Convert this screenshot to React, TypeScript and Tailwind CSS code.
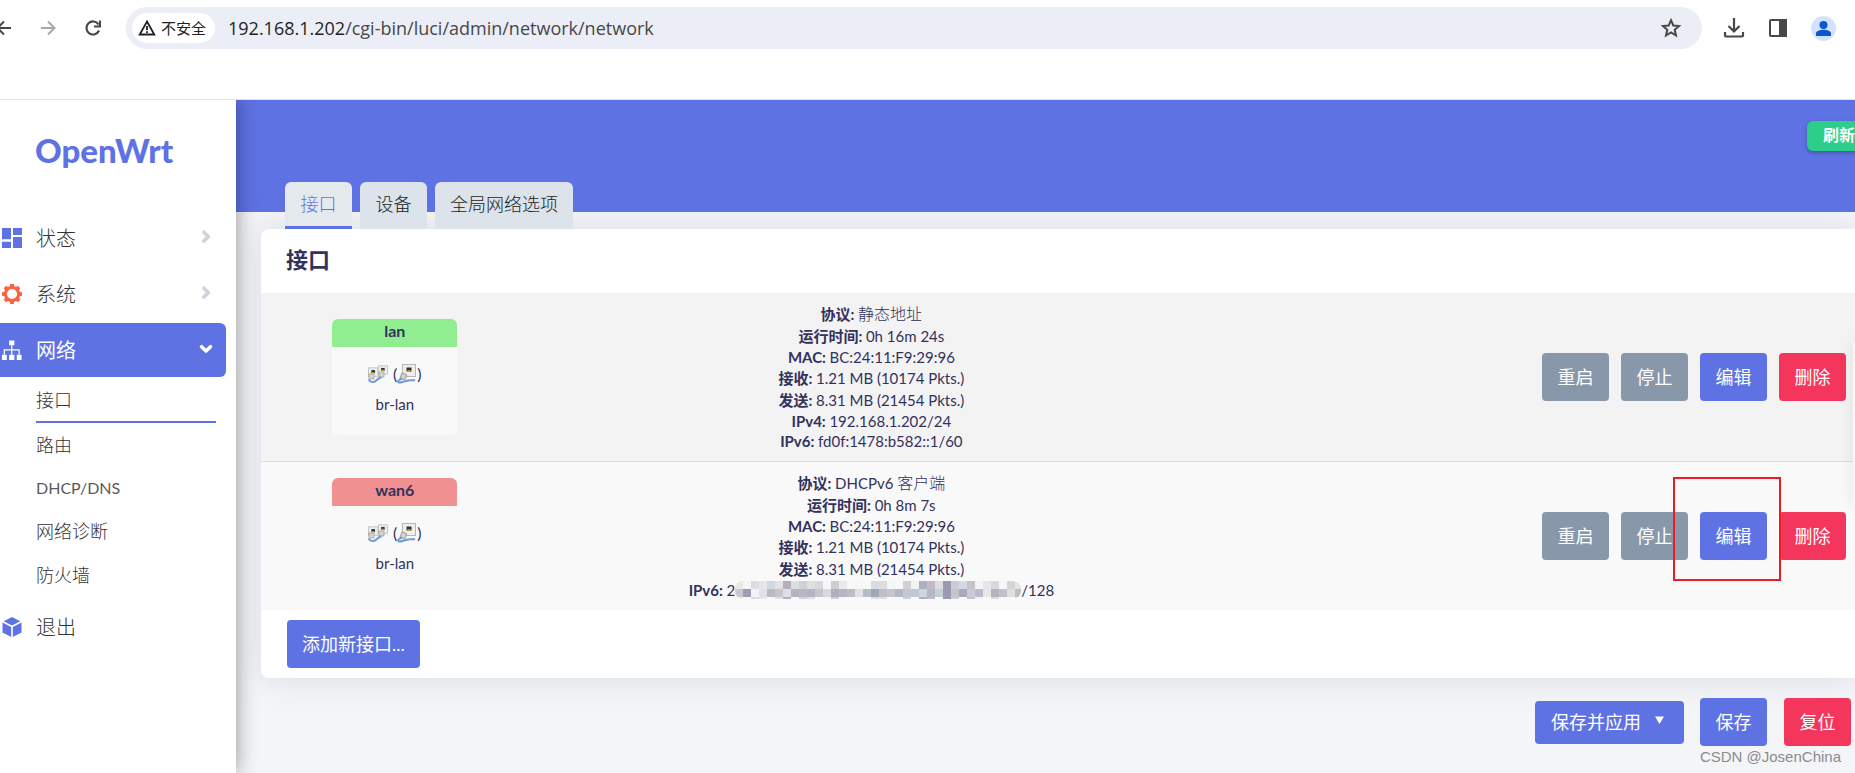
import type { ReactNode } from 'react';

const navText = 'flex h-[54px] items-center pl-[2px] pr-[11px] text-xl font-light';

function Chevron({ open = false }: { open?: boolean }) {
  return (
    <svg
      viewBox="0 0 18 18"
      className={open ? 'ml-auto size-[18px] text-white' : 'ml-auto size-[18px] text-[#ced4da]'}
      fill="none"
      stroke="currentColor"
      strokeWidth="3.6"
      strokeLinecap="round"
      strokeLinejoin="round"
      aria-hidden="true"
    >
      {open ? <path d="M4.500 5.700 9 10l4.500-4.300" /> : <path d="M6.800 3.200 11.400 7.600l-4.600 4.400" />}
    </svg>
  );
}

function StatusIcon() {
  return (
    <svg viewBox="0 0 20 20" className="size-5" fill="#5e72e4" aria-hidden="true">
      <path d="M0 0h9v11.3H0zM0 13.7h9V20H0zM11 0h9v7h-9zM11 9h9v11h-9z" />
    </svg>
  );
}

function GearIcon() {
  return (
    <svg viewBox="0 0 20 20" className="size-5" fill="#fb6340" aria-hidden="true">
      <circle cx="10" cy="10" r="6.600" fill="none" stroke="#fb6340" strokeWidth="3" />
      {[0, 45, 90, 135, 180, 225, 270, 315].map((a) => (
        <path key={a} d="M8.200 0h3.600l.5 3.500H7.700z" transform={`rotate(${a} 10 10)`} />
      ))}
    </svg>
  );
}

function NetworkIcon() {
  return (
    <svg viewBox="0 0 21 21" className="h-[21px] w-5" fill="#fff" aria-hidden="true">
      <path d="M7.500 0h5.500v5h-5.500zM0 15h5v5.500H0zM7.500 15h5.500v5.500h-5.500zM15.500 15h5v5.500h-5z" />
      <path d="M10.250 5v10M2.500 15v-5.200h15.500V15" fill="none" stroke="#fff" strokeWidth="1.300" />
    </svg>
  );
}

function CubeIcon() {
  return (
    <svg viewBox="0 0 20 20" className="size-5" fill="#5e72e4" aria-hidden="true">
      <path d="M10 0 18.300 4.300 10 8.600 1.700 4.300z" />
      <path d="M.5 5.600 9.200 10v10L.5 15.500zM19.500 5.600 10.800 10v10l8.700-4.500z" />
    </svg>
  );
}

function Jack({ x, y, s }: { x: number; y: number; s: number }) {
  return (
    <g transform={`translate(${x} ${y}) scale(${s})`}>
      <rect x=".5" y=".5" width="13" height="12" fill="#eeeeec" stroke="#b4b6b3" />
      <rect x="4.500" y="3.500" width="5" height="4" fill="#2e3436" />
      <rect x="5.500" y="6" width="3" height="2" fill="#b59a35" />
    </g>
  );
}

function BridgeIcon() {
  return (
    <svg viewBox="0 0 20 19" className="h-[19px] w-5" aria-hidden="true">
      <Jack x={0} y={2.5} s={0.74} />
      <Jack x={10} y={0.5} s={0.7} />
      <rect x="1" y="9" width="5" height="5" fill="#d4d4d2" stroke="#9a9c99" strokeWidth=".7" />
      <rect x="11" y="7" width="5" height="5" fill="#d4d4d2" stroke="#9a9c99" strokeWidth=".7" />
      <path d="M.8 14.500c1.500 3.300 5 3.300 7.500 1s3-2.800 5.200-3.300" fill="none" stroke="#6f9bd0" strokeWidth="2" />
    </svg>
  );
}

function PortIcon() {
  return (
    <svg viewBox="0 0 20 20" className="size-5" aria-hidden="true">
      <Jack x={5} y={0} s={1} />
      <rect x="4" y="9.500" width="5" height="5.500" fill="#d4d4d2" stroke="#8f918e" strokeWidth=".8" transform="rotate(20 6 12)" />
      <path d="M5 14.500c-3 1-5 3.500-3 4s5-1.500 9-2 4 .3 7-.5" fill="none" stroke="#6f9bd0" strokeWidth="2" />
    </svg>
  );
}

const mosaicTop = ['#ece8e4', '#f4f5f7', '#dcdce2', '#e6e6ea', '#d2d8e2', '#e2e2e6', '#b4b0be', '#dcdee4', '#cfd0d8', '#e0dfe4', '#d8d8da', '#f6f6f8', '#cfccd4', '#ece9ee', '#f8f8f8', '#f6f6f8', '#f8f8f8', '#d8dce4', '#dddde0', '#f4f6f6', '#f8f8f8', '#d2d0d4', '#f2f2f4', '#abb0c0', '#c2bac8', '#dcdce2', '#9a9aae', '#cbcdd6', '#d0dae8', '#c6c2ca', '#f4f2f4', '#e6e6e8', '#dcd8e0', '#f6f6f6', '#d4d4d6', '#e4e4e6'];
const mosaicBottom = ['#c9c7d2', '#9c9cb2', '#f0f4f6', '#e2e2e6', '#b8bac4', '#cac4ce', '#dcdfe6', '#b4b4c0', '#b6b8c2', '#b4b4c2', '#c6c6cc', '#d8dae0', '#aeb0be', '#b6b6c2', '#bfbbc0', '#e2e2e6', '#b8bac6', '#a4a6b8', '#bebec8', '#c6c4cc', '#b4b6c4', '#c4c8d4', '#bec8d6', '#d2d4dc', '#b4b6c4', '#c4cfd2', '#9a9ab0', '#c4c4ce', '#a8aabc', '#cacad2', '#b8bccc', '#e8e6ea', '#b4b4c0', '#c0c2ca', '#dedee0', '#c2bcc4'];

function Mosaic() {
  return (
    <svg viewBox="0 0 286 18" className="h-[18px] w-[286px] rounded-lg" aria-hidden="true">
      {mosaicTop.map((c, i) => (
        <rect key={i} x={i * 8} y="0" width="8" height="8" fill={c} />
      ))}
      {mosaicBottom.map((c, i) => (
        <rect key={i} x={i * 8} y="8" width="8" height="8" fill={c} />
      ))}
      {mosaicTop.map((c, i) => (i % 3 === 1 ? null : <rect key={i} x={i * 8} y="16" width="8" height="2" fill={c} />))}
    </svg>
  );
}

function Btn({ tone, children }: { tone: 'gray' | 'blue' | 'red'; children: ReactNode }) {
  const tones = { gray: 'bg-[#8898aa]', blue: 'bg-[#5e72e4]', red: 'bg-[#f5365c]' };
  return (
    <button type="button" className={`h-12 min-w-[67px] rounded px-[15px] pb-px text-lg text-white ${tones[tone]}`}>
      {children}
    </button>
  );
}

function Line({ label, cjk = false, children }: { label: string; cjk?: boolean; children: ReactNode }) {
  return (
    <div className={`flex items-center justify-center whitespace-pre ${cjk ? 'h-[22px]' : 'h-5'}`}>
      <strong>{label} </strong>
      {children}
    </div>
  );
}

function IfaceBadge({ name, head }: { name: string; head: string }) {
  return (
    <div className="mx-auto h-[116px] w-[125px] overflow-hidden rounded-md bg-[#f9f9f9] text-center">
      <div className={`h-7 text-base leading-6 font-bold ${head}`}>{name}</div>
      <div className="flex items-center justify-center pt-[17px]">
        <BridgeIcon />
        <span className="ml-[5px] text-base leading-5">(</span>
        <PortIcon />
        <span className="text-base leading-5">)</span>
      </div>
      <div className="pt-2 text-[15px] leading-6">br-lan</div>
    </div>
  );
}

function BrowserBar() {
  return (
    <header className="relative z-20 flex h-[100px] shrink-0 items-start border-b border-[#dfe1e5] bg-white pt-[7px] font-['Open_Sans','Noto_Sans_CJK_SC',sans-serif]">
      <div className="flex h-[42px] w-full items-center text-[#474747]">
        <button type="button" aria-label="后退" className="-ml-1 w-4">
          <svg viewBox="0 0 16 16" className="size-4" fill="none" stroke="currentColor" strokeWidth="2">
            <path d="M15 8H2M8 1.500 1.500 8 8 14.500" />
          </svg>
        </button>
        <button type="button" aria-label="前进" className="ml-7 w-4 text-[#a8a8a8]">
          <svg viewBox="0 0 16 16" className="size-4" fill="none" stroke="currentColor" strokeWidth="2">
            <path d="M1 8h13M8 1.500 14.500 8 8 14.500" />
          </svg>
        </button>
        <button type="button" aria-label="重新加载" className="ml-[29px] w-4">
          <svg viewBox="0 0 16 16" className="size-4" fill="none" stroke="currentColor" strokeWidth="2.200">
            <path d="M14 10.500A6.500 6.500 0 1 1 13.500 4.500" />
            <path d="M15 .5V6.500H9" />
          </svg>
        </button>
        <div className="ml-[25px] flex h-[42px] flex-1 items-center rounded-full bg-[#ebeef7] pr-5 pl-[6px]">
          <button type="button" className="flex h-[30px] items-center gap-[5px] rounded-full bg-white pr-[9px] pl-[6px] text-[15px] text-[#1f1f1f]">
            <svg viewBox="0 0 18 18" className="size-[18px]" fill="none" stroke="currentColor" strokeWidth="1.800" aria-hidden="true">
              <path d="M9 2.500 16.300 15.500H1.700z" />
              <path d="M9 7v4.200M9 12.300v1.700" />
            </svg>
            不安全
          </button>
          <a href="#url" className="ml-[13px] text-lg leading-6 text-[#474747]">
            <span className="text-[#1f1f1f]">192.168.1.202</span>/cgi-bin/luci/admin/network/network
          </a>
          <button type="button" aria-label="收藏" className="ml-auto">
            <svg viewBox="0 0 22 22" className="size-[22px]" fill="none" stroke="currentColor" strokeWidth="2" aria-hidden="true">
              <path d="M11 3.200 13.300 8.500 19 9 14.700 12.800 16 18.500 11 15.500 6 18.500 7.300 12.800 3 9 8.700 8.500z" />
            </svg>
          </button>
        </div>
        <div className="mr-[19px] ml-[21px] flex items-center gap-[23px]">
          <button type="button" aria-label="下载">
            <svg viewBox="0 0 22 22" className="size-[22px]" fill="none" stroke="currentColor" strokeWidth="2.200" aria-hidden="true">
              <path d="M11 1v13M5.500 9 11 14.500 16.500 9M2 15v3.500q0 1 1 1h16q1 0 1-1V15" />
            </svg>
          </button>
          <button type="button" aria-label="侧边栏">
            <svg viewBox="0 0 20 20" className="size-5" fill="none" stroke="currentColor" strokeWidth="2" aria-hidden="true">
              <rect x="2" y="2" width="16" height="16" rx="1" />
              <path d="M12 2h6v16h-6z" fill="currentColor" />
            </svg>
          </button>
          <button type="button" aria-label="用户" className="size-[25px] rounded-full bg-[#d3e3fd]">
            <svg viewBox="0 0 25 25" className="size-[25px]" fill="#0b57d0" aria-hidden="true">
              <circle cx="12.500" cy="9" r="4" />
              <path d="M5 20v-2.500c0-5 15-5 15 0V20z" />
            </svg>
          </button>
        </div>
      </div>
    </header>
  );
}

function Sidebar() {
  const sub = 'ml-9 mr-5 flex h-11 items-center text-lg font-light';
  return (
    <nav className="z-10 w-[236px] shrink-0 bg-white shadow-[0_0_20px_rgba(0,0,0,0.4)]">
      <a href="#home" className="block h-[111px] pt-7 pl-[35px] text-[33px] leading-[44px] font-black text-[#5e72e4]">
        OpenWrt
      </a>
      <div className="pr-[10px] text-[#333]">
        <a href="#status" className={navText}>
          <StatusIcon />
          <span className="ml-[14px]">状态</span>
          <Chevron />
        </a>
        <a href="#system" className={`mt-[2px] ${navText}`}>
          <GearIcon />
          <span className="ml-[14px]">系统</span>
          <Chevron />
        </a>
        <a href="#network" className="mt-[2px] flex h-[54px] items-center rounded-r-md bg-[#5e72e4] pr-[11px] pl-[2px] text-xl text-white">
          <NetworkIcon />
          <span className="ml-[14px]">网络</span>
          <Chevron open />
        </a>
      </div>
      <div className="pt-[2px] text-[#333]">
        <a href="#interfaces" className={`border-b-2 border-[#5e72e4] ${sub}`}>接口</a>
        <a href="#routes" className={sub}>路由</a>
        <a href="#dhcp" className="mr-5 ml-9 flex h-[42px] items-center text-base text-[#5a5a5a]">DHCP/DNS</a>
        <a href="#diagnostics" className={sub}>网络诊断</a>
        <a href="#firewall" className={sub}>防火墙</a>
      </div>
      <a href="#logout" className={`mt-[3px] text-[#333] ${navText}`}>
        <CubeIcon />
        <span className="ml-[14px]">退出</span>
      </a>
    </nav>
  );
}

export default function App() {
  const tab = 'h-[47px] min-w-[67px] rounded-t-md border-b-[3px] px-[15px] pb-px text-lg font-light';
  return (
    <div className="flex min-h-screen flex-col overflow-hidden bg-[#f4f5f7] font-[Lato,'Noto_Sans_CJK_SC',sans-serif] text-[#32325d]">
      <BrowserBar />
      <div className="flex flex-1">
        <Sidebar />
        <main className="relative min-w-0 flex-1">
          <div className="flex h-28 justify-end bg-[#5e72e4] pt-[21px]">
            <button type="button" className="-mr-4 h-[30px] rounded-md bg-[#2dce89] px-4 pb-[2px] text-base font-bold whitespace-nowrap text-white shadow-[0_2px_4px_rgba(0,0,0,0.25)]">
              刷新
            </button>
          </div>
          <div className="relative -mt-[30px] flex gap-2 pl-[49px]" role="tablist">
            <button type="button" role="tab" aria-selected="true" className={`border-[#5e72e4] bg-[#e4e9ee] text-[#5e72e4] ${tab}`}>接口</button>
            <button type="button" role="tab" aria-selected="false" className={`border-[#dce3ea] bg-[#dce3ea] text-[#222] ${tab}`}>设备</button>
            <button type="button" role="tab" aria-selected="false" className={`border-[#dce3ea] bg-[#dce3ea] text-[#222] ${tab}`}>全局网络选项</button>
          </div>
          <section className="ml-[25px] rounded-l-lg bg-white pb-[10px] shadow-[0_0_32px_rgba(136,152,170,0.25)]">
            <h2 className="h-16 pl-[25px] text-[22px] leading-[62px] font-bold">接口</h2>
            <table className="w-full table-fixed border-separate border-spacing-0">
              <colgroup>
                <col className="w-1/6" />
                <col className="w-[43%]" />
                <col />
              </colgroup>
              <tbody>
                <tr className="bg-[#f3f3f3]">
                  <td className="border-b border-[#dddddd] pl-[2px] align-middle"><IfaceBadge name="lan" head="bg-[#90ee90]" /></td>
                  <td className="border-b border-[#dddddd] py-[10px] pl-1 align-middle text-[15px]">
                    <Line label="协议:" cjk><span className="text-base font-light">静态地址</span></Line>
                    <Line label="运行时间:" cjk>0h 16m 24s</Line>
                    <Line label="MAC:">BC:24:11:F9:29:96</Line>
                    <Line label="接收:" cjk>1.21 MB (10174 Pkts.)</Line>
                    <Line label="发送:" cjk>8.31 MB (21454 Pkts.)</Line>
                    <Line label="IPv4:">192.168.1.202/24</Line>
                    <Line label="IPv6:">fd0f:1478:b582::1/60</Line>
                  </td>
                  <td className="border-b border-[#dddddd] pr-[9px] align-middle">
                    <div className="flex justify-end gap-3">
                      <Btn tone="gray">重启</Btn>
                      <Btn tone="gray">停止</Btn>
                      <Btn tone="blue">编辑</Btn>
                      <Btn tone="red">删除</Btn>
                    </div>
                  </td>
                </tr>
                <tr className="bg-[#f9f9f9]">
                  <td className="pl-[2px] align-middle"><IfaceBadge name="wan6" head="bg-[#f09090]" /></td>
                  <td className="py-[10px] pl-1 align-middle text-[15px]">
                    <Line label="协议:" cjk>DHCPv6 <span className="text-base font-light">客户端</span></Line>
                    <Line label="运行时间:" cjk>0h 8m 7s</Line>
                    <Line label="MAC:">BC:24:11:F9:29:96</Line>
                    <Line label="接收:" cjk>1.21 MB (10174 Pkts.)</Line>
                    <Line label="发送:" cjk>8.31 MB (21454 Pkts.)</Line>
                    <Line label="IPv6:">2<Mosaic />/128</Line>
                  </td>
                  <td className="pr-[9px] align-middle">
                    <div className="flex justify-end gap-3">
                      <Btn tone="gray">重启</Btn>
                      <Btn tone="gray">停止</Btn>
                      <div className="relative">
                        <Btn tone="blue">编辑</Btn>
                        <div className="pointer-events-none absolute -top-[35px] -right-[14px] -bottom-[21px] -left-[27px] z-10 border-2 border-[#ed1c24]" />
                      </div>
                      <Btn tone="red">删除</Btn>
                    </div>
                  </td>
                </tr>
              </tbody>
            </table>
            <div className="flex pt-[10px] pl-[26px]">
              <Btn tone="blue">添加新接口...</Btn>
            </div>
          </section>
          <div className="flex items-center justify-end pt-5 pr-1">
            <button type="button" className="flex h-[43px] items-center rounded bg-[#5e72e4] pr-5 pl-4 text-lg text-white">
              保存并应用
              <svg viewBox="0 0 9 8" className="mb-1 ml-[14px] h-2 w-[9px]" fill="#fff" aria-hidden="true">
                <path d="M0 .5h9L4.500 8z" />
              </svg>
            </button>
            <div className="ml-4 flex gap-[17px]">
              <Btn tone="blue">保存</Btn>
              <Btn tone="red">复位</Btn>
            </div>
          </div>
          <div className="absolute right-[14px] bottom-1 font-['Liberation_Sans',sans-serif] text-[15px] leading-6 text-[#8a8c8f]">
            CSDN @JosenChina
          </div>
          <div className="absolute top-[243px] right-0 h-[162px] w-[2px] bg-[#f8f8f8] shadow-[0_0_12px_rgba(0,0,0,0.25)]" />
        </main>
      </div>
    </div>
  );
}
